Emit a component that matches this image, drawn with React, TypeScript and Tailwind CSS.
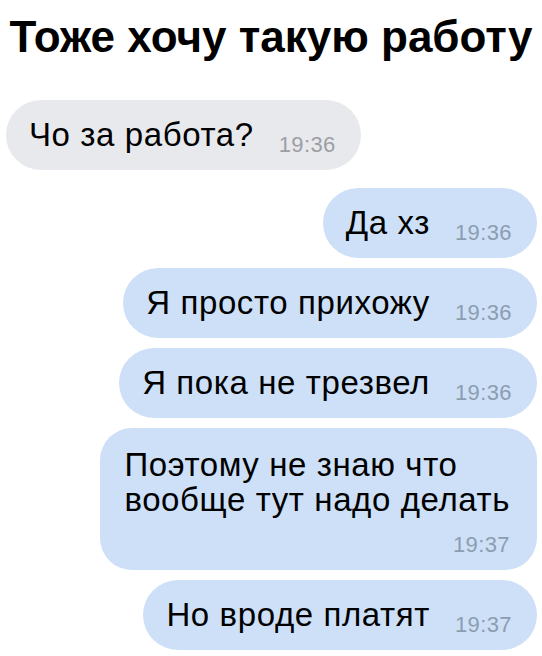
import React from 'react';

interface BubbleProps {
    text: React.ReactNode;
    time: string;
    mine?: boolean;
}

const font = "font-['Liberation_Sans',Arial,sans-serif]";

const Bubble: React.FC<BubbleProps> = ({ text, time, mine }) => {
    return (
        <div
            className={`flex items-baseline gap-[25px] rounded-full pl-[23px] pr-[25px] pt-[17px] pb-[18px] ${
                mine ? 'self-end bg-[#cde0f8]' : 'self-start bg-[#e8e9ed]'
            }`}
        >
            <span className="text-[33px] leading-[35px] tracking-[0.6px] text-black whitespace-nowrap">{text}</span>
            <span
                className={`text-[22px] leading-none tracking-[0.4px] translate-y-[6px] ${
                    mine ? 'text-[#8c9db0]' : 'text-[#9c9ea3]'
                }`}
            >
                {time}
            </span>
        </div>
    );
};

const App: React.FC = () => {
    return (
        <div className={`w-[542px] min-h-screen bg-white ${font}`}>
            <h1 className="pt-[15px] text-center text-[44px] leading-none font-bold text-black">
                Тоже хочу такую работу
            </h1>
            <div className="flex flex-col mt-[41px] pl-[6px] pr-[5px]">
                <Bubble text="Чо за работа?" time="19:36" />
                <div className="flex flex-col gap-[10px] mt-[18px]">
                    <Bubble mine text="Да хз" time="19:36" />
                    <Bubble mine text="Я просто прихожу" time="19:36" />
                    <Bubble mine text="Я пока не трезвел" time="19:36" />
                    <div className="self-end flex flex-col rounded-[32px] bg-[#cde0f8] pl-[24px] pr-[27px] pt-[19px] pb-[14px]">
                        <span className="text-[33px] leading-[35px] tracking-[0.6px] text-black whitespace-nowrap">
                            Поэтому не знаю что
                            <br />
                            вообще тут надо делать
                        </span>
                        <span className="self-end mt-[17px] text-[22px] leading-none tracking-[0.4px] text-[#8c9db0]">
                            19:37
                        </span>
                    </div>
                    <Bubble mine text="Но вроде платят" time="19:37" />
                </div>
            </div>
        </div>
    );
};

export default App;
